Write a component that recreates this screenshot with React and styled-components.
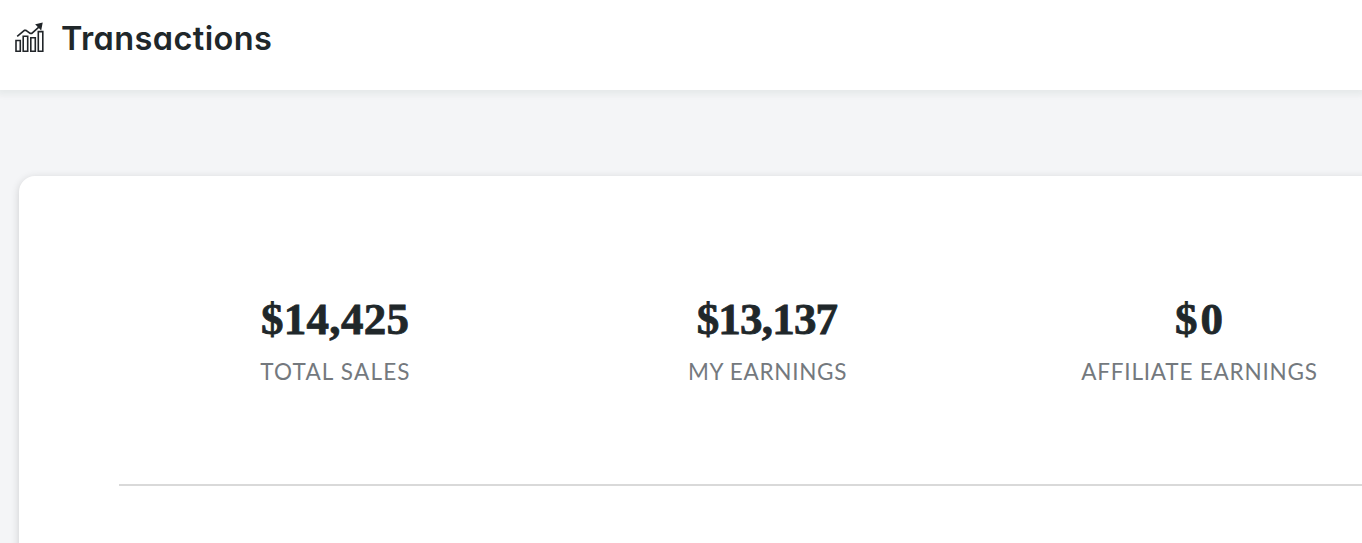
import React from 'react';
import styled, { createGlobalStyle } from 'styled-components';

const GlobalStyle = createGlobalStyle`
  * {
    box-sizing: border-box;
  }

  body {
    margin: 0;
    overflow: hidden;
    background: #f4f5f7;
    color: #20272a;
    font-family: Lato, sans-serif;
  }
`;

const Page = styled.div`
  height: 543px;
  overflow: hidden;
`;

const Header = styled.header`
  display: flex;
  align-items: flex-start;
  height: 90px;
  padding: 18px 14px 0;
  background: #fff;
  box-shadow: 0 2px 6px 3px rgba(20, 50, 45, 0.055);
`;

const ChartIcon = styled.svg`
  flex: none;
  width: 32px;
  height: 32px;
  margin-top: 4px;
  fill: none;
  stroke: #212529;
  stroke-width: 1.6;
`;

const Title = styled.h1`
  margin: 0 0 0 15px;
  font-family: Inter, Lato, sans-serif;
  font-feature-settings: 'cv11';
  font-size: 32.5px;
  font-weight: 600;
  line-height: 42px;
  letter-spacing: 0.4px;
`;

const Card = styled.main`
  width: 1500px;
  height: 500px;
  margin: 86px 0 0 19px;
  padding: 0 100px;
  border-radius: 16px;
  background: #fff;
  box-shadow: 0 2px 8px rgba(0, 0, 0, 0.16);
`;

const Stats = styled.section`
  display: grid;
  grid-template-columns: repeat(3, 432px);
  height: 310px;
  padding-top: 118px;
  border-bottom: 2px solid #d9d9d9;
`;

const Stat = styled.div`
  text-align: center;
`;

const Amount = styled.div`
  padding-left: ${({ $spacing }) => Math.max($spacing, 0)}px;
  font-family: 'Liberation Serif', serif;
  font-size: 45px;
  font-weight: 700;
  line-height: 50px;
  letter-spacing: ${({ $spacing }) => $spacing}px;
  -webkit-text-stroke: 0.8px currentColor;
`;

const Label = styled.div`
  margin-top: 13px;
  padding-left: 1px;
  color: #74797e;
  font-size: 22.5px;
  line-height: 30px;
  letter-spacing: ${({ $spacing }) => $spacing}px;
`;

const stats = [
  { amount: '$14,425', label: 'TOTAL SALES', amountSpacing: 0.3, labelSpacing: 1.2 },
  { amount: '$13,137', label: 'MY EARNINGS', amountSpacing: -0.8, labelSpacing: 0.7 },
  { amount: '$0', label: 'AFFILIATE EARNINGS', amountSpacing: 3, labelSpacing: 0.8 },
];

const App = () => (
  <>
    <GlobalStyle />
    <Page>
      <Header>
        <ChartIcon viewBox="0 0 32 32">
          <path d="M2 18.5h4.3v10.7H2zM9.2 14.2h4.5v15H9.2zM16.8 15.8h4.5v13.4h-4.5zM24.3 9.6h4.5v19.6h-4.5z" />
          <path d="M3.2 14.4l7.2-6h1.5l4.3 3h1.6l8.7-7.8" />
          <path d="M22.7 2.8l5-1.2-1 5.2z" fill="#212529" />
        </ChartIcon>
        <Title>Transactions</Title>
      </Header>
      <Card>
        <Stats>
          {stats.map((stat) => (
            <Stat key={stat.label}>
              <Amount $spacing={stat.amountSpacing}>{stat.amount}</Amount>
              <Label $spacing={stat.labelSpacing}>{stat.label}</Label>
            </Stat>
          ))}
        </Stats>
      </Card>
    </Page>
  </>
);

export default App;
